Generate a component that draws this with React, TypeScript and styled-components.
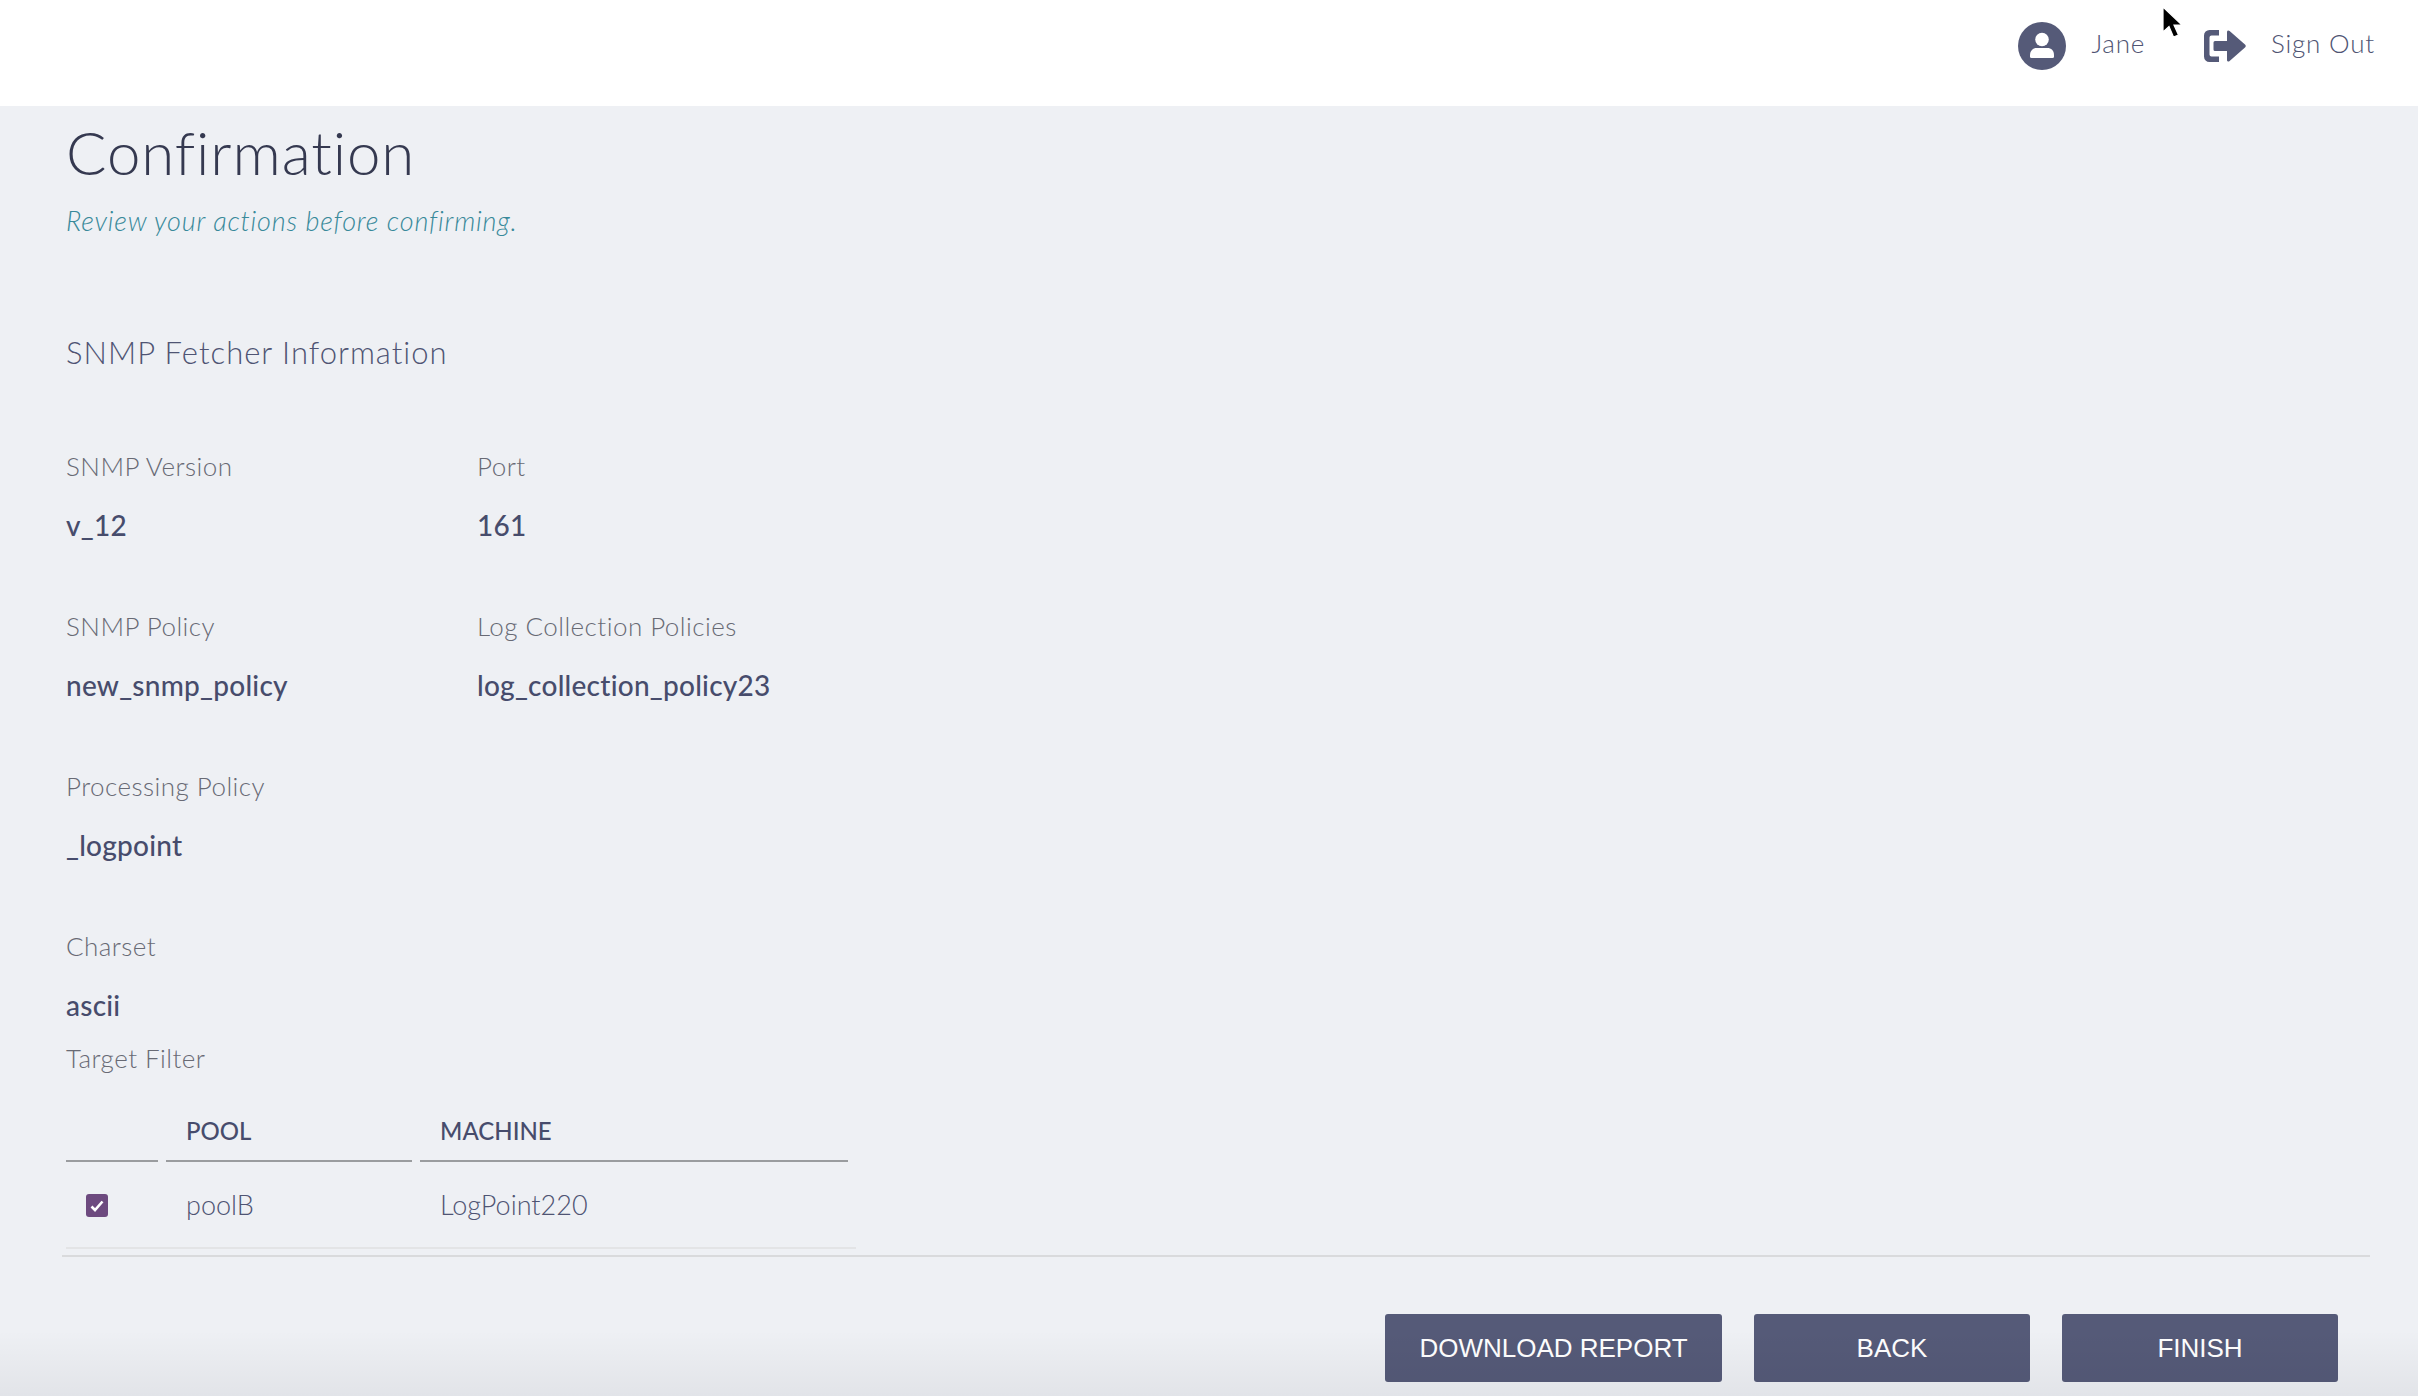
import React from 'react';
import styled, { createGlobalStyle } from 'styled-components';

const Global = createGlobalStyle`
  html, body { margin: 0; padding: 0; background: #eef0f4; }
  body { font-family: "Lato", "Open Sans", sans-serif; overflow: hidden; }
  * { box-sizing: border-box; }
`;

const Page = styled.div`
  position: relative;
  width: 2418px;
  height: 1396px;
  overflow: hidden;
  background: #eef0f4;
  display: flex;
  flex-direction: column;
`;

const TopBar = styled.header`
  height: 106px;
  flex: none;
  background: #fff;
  display: flex;
  align-items: center;
  justify-content: flex-end;
  padding: 0 43px 20px 0;
  color: #4f5473;
`;

const UserName = styled.span`
  font-size: 26px;
  font-weight: 300;
  letter-spacing: 0.7px;
  margin-left: 25px;
  margin-right: 59px;
`;

const SignOutLabel = styled.span`
  font-size: 26px;
  font-weight: 300;
  letter-spacing: 0.8px;
  margin-left: 25px;
`;

const Content = styled.main`
  flex: 1;
  padding: 11px 0 0 66px;
  display: flex;
  flex-direction: column;
`;

const Title = styled.h1`
  margin: 0;
  font-size: 60px;
  line-height: 70px;
  font-weight: 300;
  color: #353950;
  letter-spacing: 0.9px;
`;

const Subtitle = styled.p`
  margin: 17px 0 0;
  font-size: 27px;
  line-height: 34px;
  font-weight: 300;
  font-style: italic;
  color: #38899a;
  letter-spacing: 0.8px;
`;

const SectionTitle = styled.h2`
  margin: 96px 0 0;
  font-size: 31px;
  line-height: 36px;
  font-weight: 300;
  color: #4f5473;
  letter-spacing: 1px;
`;

const FieldGrid = styled.div`
  margin-top: 81px;
  display: grid;
  grid-template-columns: 411px 1fr;
  grid-auto-rows: 160px;
`;

const Field = styled.div`
  display: flex;
  flex-direction: column;
`;

const Label = styled.span`
  font-size: 26px;
  line-height: 30px;
  font-weight: 300;
  color: #686a74;
  letter-spacing: 0.45px;
`;

const Value = styled.span`
  margin-top: 29px;
  font-size: 28px;
  line-height: 30px;
  font-weight: 500;
  color: #474c6c;
  letter-spacing: 0.25px;
`;

const FilterLabel = styled(Label)`
  margin-top: -48px;
`;

const FilterTable = styled.div`
  margin-top: 32px;
  width: 790px;
  display: flex;
  flex-direction: column;
`;

const HeadRow = styled.div`
  display: grid;
  grid-template-columns: 92px 246px 428px;
  column-gap: 8px;
`;

const HeadCell = styled.div`
  height: 57px;
  padding: 0 0 14px 20px;
  display: flex;
  align-items: flex-end;
  font-size: 24px;
  line-height: 30px;
  font-weight: 500;
  color: #474c6c;
  border-bottom: 2px solid #9a9c9f;
`;

const BodyRow = styled.div`
  height: 87px;
  display: grid;
  grid-template-columns: 92px 246px 428px;
  column-gap: 8px;
  align-items: center;
  border-bottom: 2px solid #e3e4e6;
`;

const CheckCell = styled.div`
  padding-left: 20px;
  display: flex;
  padding-top: 2px;
`;

const CheckBox = styled.span`
  width: 22px;
  height: 23px;
  border-radius: 3px;
  background: #6d4a7f;
  display: flex;
  align-items: center;
  justify-content: center;
`;

const BodyCell = styled.div`
  padding-left: 20px;
  font-size: 27px;
  line-height: 30px;
  font-weight: 300;
  color: #4f5473;
`;

const Divider = styled.hr`
  margin: 6px 48px 0 -4px;
  border: 0;
  height: 2px;
  background: #d9dadc;
`;

const Actions = styled.div`
  margin-top: 57px;
  padding-right: 80px;
  display: flex;
  justify-content: flex-end;
  gap: 32px;
`;

const ActionButton = styled.button<{ $width: number }>`
  width: ${(p) => p.$width}px;
  height: 68px;
  border: 0;
  border-radius: 3px;
  background: #555a78;
  color: #fff;
  font-family: "Liberation Sans", Arial, sans-serif;
  font-size: 26px;
  letter-spacing: 0;
  padding: 0;
`;

const BottomShade = styled.div`
  position: absolute;
  left: 0;
  right: 0;
  bottom: 0;
  height: 66px;
  pointer-events: none;
  background: linear-gradient(to bottom, rgba(0, 0, 20, 0), rgba(0, 0, 20, 0.05));
`;

const Cursor = styled.svg`
  position: absolute;
  left: 2160px;
  top: 6px;
`;

const Icon = styled.svg`
  flex: none;
  display: block;
  margin-top: 5px;
`;

const fields = [
  ['SNMP Version', 'v_12'],
  ['Port', '161'],
  ['SNMP Policy', 'new_snmp_policy'],
  ['Log Collection Policies', 'log_collection_policy23'],
  ['Processing Policy', '_logpoint'],
  [null, null],
  ['Charset', 'ascii'],
];

export default function App() {
  return (
    <Page>
      <Global />
      <TopBar>
        <Icon width="48" height="48" viewBox="0 0 48 48">
          <circle cx="24" cy="24" r="24" fill="#555a78" />
          <circle cx="24" cy="17.5" r="6.8" fill="#fff" />
          <path d="M12 33c0-4.400 3-7 6.500-7h11c3.500 0 6.500 2.600 6.500 7v1.500a1.500 1.500 0 0 1-1.500 1.500h-21a1.500 1.500 0 0 1-1.500-1.500z" fill="#fff" />
        </Icon>
        <UserName>Jane</UserName>
        <Icon width="42" height="32" viewBox="0 0 42 32">
          <path d="M15 0H5.500A5.500 5.500 0 0 0 0 5.500v21A5.500 5.500 0 0 0 5.500 32H15v-5.500H7.500a2 2 0 0 1-2-2v-16.900a2 2 0 0 1 2-2H15z" fill="#555a78" />
          <path d="M11 11h12V2c0-1.500 1.500-2 2.600-1L41 14.500c1 1 1 2 0 3L25.600 31c-1.100 1-2.600.5-2.600-1v-9H11a1.500 1.500 0 0 1-1.500-1.500v-7A1.500 1.500 0 0 1 11 11z" fill="#555a78" />
        </Icon>
        <SignOutLabel>Sign Out</SignOutLabel>
      </TopBar>
      <Content>
        <Title>Confirmation</Title>
        <Subtitle>Review your actions before confirming.</Subtitle>
        <SectionTitle>SNMP Fetcher Information</SectionTitle>
        <FieldGrid>
          {fields.map(([label, value], i) => (
            <Field key={i}>
              {label && <Label>{label}</Label>}
              {value && <Value>{value}</Value>}
            </Field>
          ))}
        </FieldGrid>
        <FilterLabel>Target Filter</FilterLabel>
        <FilterTable>
          <HeadRow>
            <HeadCell />
            <HeadCell>POOL</HeadCell>
            <HeadCell>MACHINE</HeadCell>
          </HeadRow>
          <BodyRow>
            <CheckCell>
              <CheckBox>
                <svg width="14" height="12" viewBox="0 0 14 12">
                  <path d="M1.500 6.500 5 10l7.500-8.500" fill="none" stroke="#fff" strokeWidth="2.600" />
                </svg>
              </CheckBox>
            </CheckCell>
            <BodyCell>poolB</BodyCell>
            <BodyCell>LogPoint220</BodyCell>
          </BodyRow>
        </FilterTable>
        <Divider />
        <Actions>
          <ActionButton $width={337}>DOWNLOAD REPORT</ActionButton>
          <ActionButton $width={276}>BACK</ActionButton>
          <ActionButton $width={276}>FINISH</ActionButton>
        </Actions>
      </Content>
      <BottomShade />
      <Cursor width="24" height="34" viewBox="0 0 24 34">
        <path d="M3 1v25l6-5.500 4.500 10.500 5-2-4.500-10h8z" fill="#000" stroke="#fff" strokeWidth="1.200" />
      </Cursor>
    </Page>
  );
}
